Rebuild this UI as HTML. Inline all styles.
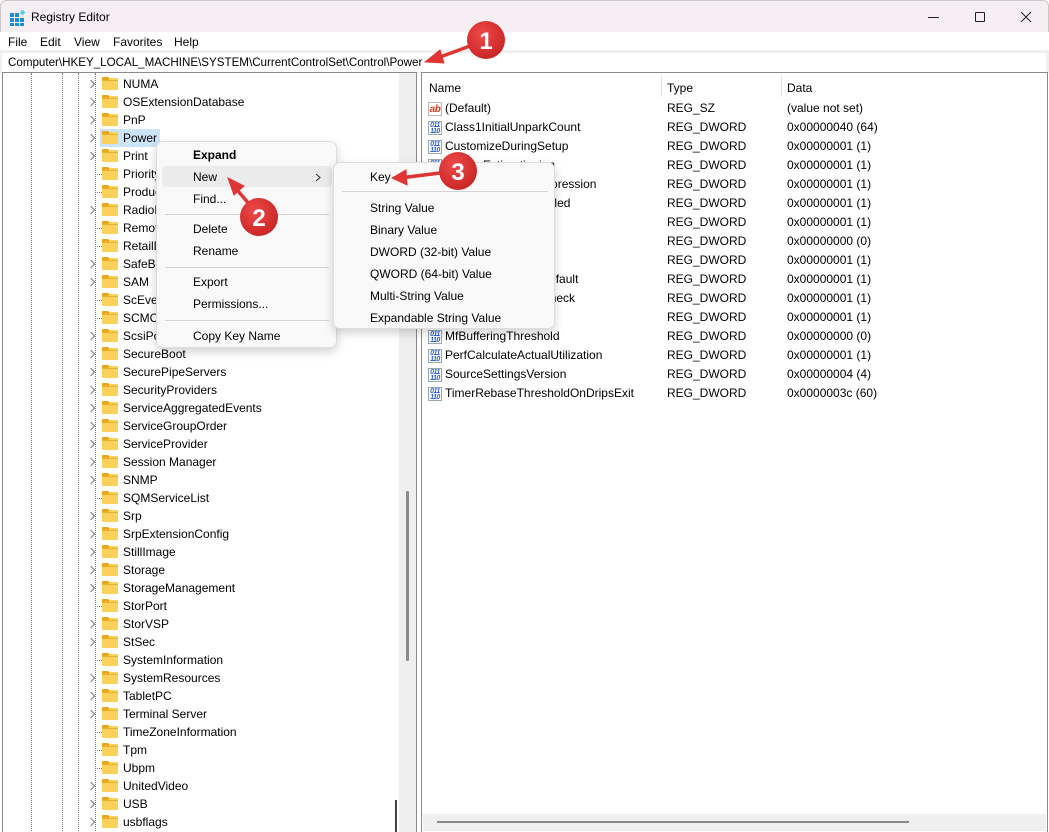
<!DOCTYPE html>
<html><head><meta charset="utf-8">
<style>
*{margin:0;padding:0;box-sizing:border-box}
body{width:1049px;height:830px;overflow:hidden;background:#fff;font-family:"Liberation Sans",sans-serif;font-size:12px;color:#000;position:relative}
.abs{position:absolute}
#title{left:0;top:0;width:1049px;height:32px;background:#f6eef3;border:1px solid #c8c8c8;border-bottom:none;border-radius:6px 6px 0 0}
#menu{left:0;top:32px;width:1049px;height:18px;background:#fff}
#menu span{position:absolute;top:3px;font-size:12px}
#addrbg{left:0;top:50px;width:1049px;height:23px;background:#efefef}
#addr{left:2px;top:53px;width:1044px;height:19px;background:#fff;padding-left:6px;line-height:19px;font-size:11.6px}
#tree{left:2px;top:72px;width:415px;height:760px;border-top:1px solid #8a8a8a;border-left:1px solid #8a8a8a;border-right:1px solid #8a8a8a;overflow:hidden}
#list{left:421px;top:72px;width:627px;height:760px;border:1px solid #8a8a8a;border-bottom:none}
.vd{position:absolute;top:0;height:760px;border-left:1px dotted #777}
.r{position:absolute;left:0;height:18px;line-height:18px;white-space:nowrap}
.r .t{position:absolute;left:120px;top:0}
.c{position:absolute;left:85px;top:6px;width:6px;height:6px;border-right:1.3px solid #777;border-top:1.3px solid #777;transform:rotate(45deg)}
.d{position:absolute;left:92px;top:9px;width:7px;border-top:1px dotted #777}
.f{position:absolute;left:99px;top:3px;width:16px;height:12px;background:#fbd15b;border-radius:1px}
.f:before{content:"";position:absolute;left:0;top:-1px;width:7px;height:3px;background:#e9a81a;border-radius:1px 1px 0 0}
.f:after{content:"";position:absolute;left:0;top:2px;width:16px;height:1px;background:#e9b12a}
.lr{position:absolute;left:0;height:19px;line-height:19px;width:625px;white-space:nowrap}
.lr .n{position:absolute;left:23px}
.lr .ty{position:absolute;left:245px}
.lr .da{position:absolute;left:365px}
.ic{position:absolute;left:6px;top:3px;width:14px;height:14px;border:1px solid #9aa;background:#fff;font-size:7px;line-height:6px;color:#2a5fd6;font-weight:bold;text-align:center;letter-spacing:-0.5px;padding-top:1px}
.ab{color:#d33c1c;font-size:10px;line-height:12px;border-color:#bbb}
.cm{position:absolute;background:#f9f9f9;border:1px solid #ddd;border-radius:7px;box-shadow:0 4px 10px rgba(0,0,0,.18)}
.mi{position:absolute;left:36px;font-size:12px}
.sep{position:absolute;height:1px;background:#d4d4d4}
</style></head><body>
<div id="title" class="abs">
 <svg class="abs" style="left:9px;top:9px" width="16" height="16" viewBox="0 0 16 16">
  <g fill="#1a8fd8"><rect x="0" y="3" width="4" height="4"/><rect x="5" y="3" width="4" height="4"/><rect x="0" y="8" width="4" height="4"/><rect x="5" y="8" width="4" height="4"/><rect x="10" y="8" width="4" height="4"/><rect x="0" y="13" width="4" height="3"/><rect x="5" y="13" width="4" height="3"/><rect x="10" y="13" width="4" height="3"/></g>
  <rect x="10.5" y="0.5" width="4" height="4" fill="#5cc8f5" transform="rotate(45 12.5 2.5)"/>
 </svg>
 <span class="abs" style="left:30px;top:9px;font-size:12px">Registry Editor</span>
 <div class="abs" style="left:927px;top:16px;width:11px;height:1px;background:#222"></div>
 <div class="abs" style="left:974px;top:11px;width:10px;height:10px;border:1px solid #222;border-radius:1px"></div>
 <svg class="abs" style="left:1019px;top:10px" width="12" height="12"><path d="M1 1L11 11M11 1L1 11" stroke="#222" stroke-width="1"/></svg>
</div>
<div id="menu" class="abs"><span style="left:8px">File</span><span style="left:40px">Edit</span><span style="left:74px">View</span><span style="left:113px">Favorites</span><span style="left:174px">Help</span></div>
<div id="addrbg" class="abs"></div>
<div id="addr" class="abs">Computer\HKEY_LOCAL_MACHINE\SYSTEM\CurrentControlSet\Control\Power</div>

<div id="tree" class="abs">
 <div class="vd" style="left:28px"></div><div class="vd" style="left:59px"></div><div class="vd" style="left:75px"></div><div class="vd" style="left:92px"></div>
 <div class="abs" style="left:97px;top:56px;width:60px;height:18px;background:#cce4f7"></div>
 <div class="r" style="top:2px"><i class="c"></i><b class="f"></b><span class="t">NUMA</span></div>
 <div class="r" style="top:20px"><i class="c"></i><b class="f"></b><span class="t">OSExtensionDatabase</span></div>
 <div class="r" style="top:38px"><i class="c"></i><b class="f"></b><span class="t">PnP</span></div>
 <div class="r" style="top:56px"><i class="c"></i><b class="f"></b><span class="t">Power</span></div>
 <div class="r" style="top:74px"><i class="c"></i><b class="f"></b><span class="t">Print</span></div>
 <div class="r" style="top:92px"><i class="d"></i><b class="f"></b><span class="t">PriorityControl</span></div>
 <div class="r" style="top:110px"><i class="d"></i><b class="f"></b><span class="t">ProductOptions</span></div>
 <div class="r" style="top:128px"><i class="c"></i><b class="f"></b><span class="t">RadioManagement</span></div>
 <div class="r" style="top:146px"><i class="d"></i><b class="f"></b><span class="t">RemoteAssistance</span></div>
 <div class="r" style="top:164px"><i class="d"></i><b class="f"></b><span class="t">RetailDemo</span></div>
 <div class="r" style="top:182px"><i class="c"></i><b class="f"></b><span class="t">SafeBoot</span></div>
 <div class="r" style="top:200px"><i class="c"></i><b class="f"></b><span class="t">SAM</span></div>
 <div class="r" style="top:218px"><i class="d"></i><b class="f"></b><span class="t">ScEvents</span></div>
 <div class="r" style="top:236px"><i class="d"></i><b class="f"></b><span class="t">SCMConfig</span></div>
 <div class="r" style="top:254px"><i class="c"></i><b class="f"></b><span class="t">ScsiPort</span></div>
 <div class="r" style="top:272px"><i class="c"></i><b class="f"></b><span class="t">SecureBoot</span></div>
 <div class="r" style="top:290px"><i class="c"></i><b class="f"></b><span class="t">SecurePipeServers</span></div>
 <div class="r" style="top:308px"><i class="c"></i><b class="f"></b><span class="t">SecurityProviders</span></div>
 <div class="r" style="top:326px"><i class="c"></i><b class="f"></b><span class="t">ServiceAggregatedEvents</span></div>
 <div class="r" style="top:344px"><i class="c"></i><b class="f"></b><span class="t">ServiceGroupOrder</span></div>
 <div class="r" style="top:362px"><i class="c"></i><b class="f"></b><span class="t">ServiceProvider</span></div>
 <div class="r" style="top:380px"><i class="c"></i><b class="f"></b><span class="t">Session Manager</span></div>
 <div class="r" style="top:398px"><i class="c"></i><b class="f"></b><span class="t">SNMP</span></div>
 <div class="r" style="top:416px"><i class="d"></i><b class="f"></b><span class="t">SQMServiceList</span></div>
 <div class="r" style="top:434px"><i class="c"></i><b class="f"></b><span class="t">Srp</span></div>
 <div class="r" style="top:452px"><i class="c"></i><b class="f"></b><span class="t">SrpExtensionConfig</span></div>
 <div class="r" style="top:470px"><i class="c"></i><b class="f"></b><span class="t">StillImage</span></div>
 <div class="r" style="top:488px"><i class="c"></i><b class="f"></b><span class="t">Storage</span></div>
 <div class="r" style="top:506px"><i class="c"></i><b class="f"></b><span class="t">StorageManagement</span></div>
 <div class="r" style="top:524px"><i class="d"></i><b class="f"></b><span class="t">StorPort</span></div>
 <div class="r" style="top:542px"><i class="c"></i><b class="f"></b><span class="t">StorVSP</span></div>
 <div class="r" style="top:560px"><i class="c"></i><b class="f"></b><span class="t">StSec</span></div>
 <div class="r" style="top:578px"><i class="d"></i><b class="f"></b><span class="t">SystemInformation</span></div>
 <div class="r" style="top:596px"><i class="c"></i><b class="f"></b><span class="t">SystemResources</span></div>
 <div class="r" style="top:614px"><i class="c"></i><b class="f"></b><span class="t">TabletPC</span></div>
 <div class="r" style="top:632px"><i class="c"></i><b class="f"></b><span class="t">Terminal Server</span></div>
 <div class="r" style="top:650px"><i class="d"></i><b class="f"></b><span class="t">TimeZoneInformation</span></div>
 <div class="r" style="top:668px"><i class="d"></i><b class="f"></b><span class="t">Tpm</span></div>
 <div class="r" style="top:686px"><i class="d"></i><b class="f"></b><span class="t">Ubpm</span></div>
 <div class="r" style="top:704px"><i class="c"></i><b class="f"></b><span class="t">UnitedVideo</span></div>
 <div class="r" style="top:722px"><i class="c"></i><b class="f"></b><span class="t">USB</span></div>
 <div class="r" style="top:740px"><i class="c"></i><b class="f"></b><span class="t">usbflags</span></div>
 <div class="abs" style="left:396px;top:0;width:17px;height:760px;background:#efefef"></div>
 <div class="abs" style="left:403px;top:418px;width:3px;height:170px;background:#8a8a8a;border-radius:1px"></div>
 <div class="abs" style="left:392px;top:727px;width:2px;height:33px;background:#444"></div>
</div>

<div id="list" class="abs">
 <span class="abs" style="left:7px;top:8px">Name</span>
 <div class="abs" style="left:239px;top:2px;width:1px;height:22px;background:#e5e5e5"></div>
 <span class="abs" style="left:245px;top:8px">Type</span>
 <div class="abs" style="left:359px;top:2px;width:1px;height:22px;background:#e5e5e5"></div>
 <span class="abs" style="left:365px;top:8px">Data</span>
 <div class="lr" style="top:26px"><i class="ic ab">ab</i><span class="n">(Default)</span><span class="ty">REG_SZ</span><span class="da">(value not set)</span></div>
 <div class="lr" style="top:45px"><i class="ic">011<br>110</i><span class="n">Class1InitialUnparkCount</span><span class="ty">REG_DWORD</span><span class="da">0x00000040 (64)</span></div>
 <div class="lr" style="top:64px"><i class="ic">011<br>110</i><span class="n">CustomizeDuringSetup</span><span class="ty">REG_DWORD</span><span class="da">0x00000001 (1)</span></div>
 <div class="lr" style="top:83px"><i class="ic">011<br>110</i><span class="n">EnergyEstimationion</span><span class="ty">REG_DWORD</span><span class="da">0x00000001 (1)</span></div>
 <div class="lr" style="top:102px"><i class="ic">011<br>110</i><span class="n">EventProcessorSuppression</span><span class="ty">REG_DWORD</span><span class="da">0x00000001 (1)</span></div>
 <div class="lr" style="top:121px"><i class="ic">011<br>110</i><span class="n">HiberbootEnabledabled</span><span class="ty">REG_DWORD</span><span class="da">0x00000001 (1)</span></div>
 <div class="lr" style="top:140px"><i class="ic">011<br>110</i><span class="n">HibernateEnabled</span><span class="ty">REG_DWORD</span><span class="da">0x00000001 (1)</span></div>
 <div class="lr" style="top:159px"><i class="ic">011<br>110</i><span class="n">Hiber</span><span class="ty">REG_DWORD</span><span class="da">0x00000000 (0)</span></div>
 <div class="lr" style="top:178px"><i class="ic">011<br>110</i><span class="n">Idle</span><span class="ty">REG_DWORD</span><span class="da">0x00000001 (1)</span></div>
 <div class="lr" style="top:197px"><i class="ic">011<br>110</i><span class="n">LidReliabilityStateDefault</span><span class="ty">REG_DWORD</span><span class="da">0x00000001 (1)</span></div>
 <div class="lr" style="top:216px"><i class="ic">011<br>110</i><span class="n">MfOverridesSleepCheck</span><span class="ty">REG_DWORD</span><span class="da">0x00000001 (1)</span></div>
 <div class="lr" style="top:235px"><i class="ic">011<br>110</i><span class="n">Mf</span><span class="ty">REG_DWORD</span><span class="da">0x00000001 (1)</span></div>
 <div class="lr" style="top:254px"><i class="ic">011<br>110</i><span class="n">MfBufferingThreshold</span><span class="ty">REG_DWORD</span><span class="da">0x00000000 (0)</span></div>
 <div class="lr" style="top:273px"><i class="ic">011<br>110</i><span class="n">PerfCalculateActualUtilization</span><span class="ty">REG_DWORD</span><span class="da">0x00000001 (1)</span></div>
 <div class="lr" style="top:292px"><i class="ic">011<br>110</i><span class="n">SourceSettingsVersion</span><span class="ty">REG_DWORD</span><span class="da">0x00000004 (4)</span></div>
 <div class="lr" style="top:311px"><i class="ic">011<br>110</i><span class="n">TimerRebaseThresholdOnDripsExit</span><span class="ty">REG_DWORD</span><span class="da">0x0000003c (60)</span></div>
 <div class="abs" style="left:1px;top:741px;width:623px;height:17px;background:#efefef"></div>
 <div class="abs" style="left:15px;top:748px;width:472px;height:2px;background:#8a8a8a"></div>
</div>

<div class="cm" style="left:156px;top:141px;width:181px;height:207px">
 <span class="mi" style="top:6px;font-weight:bold">Expand</span>
 <div class="abs" style="left:5px;top:24px;width:170px;height:21px;background:#ebebeb;border-radius:4px"></div>
 <span class="mi" style="top:28px">New</span>
 <svg class="abs" style="left:158px;top:31px" width="6" height="9"><path d="M1 1L5 4.5L1 8" stroke="#333" fill="none" stroke-width="1.1"/></svg>
 <span class="mi" style="top:50px">Find...</span>
 <div class="sep" style="left:8px;top:72px;width:164px"></div>
 <span class="mi" style="top:80px">Delete</span>
 <span class="mi" style="top:102px">Rename</span>
 <div class="sep" style="left:8px;top:125px;width:164px"></div>
 <span class="mi" style="top:133px">Export</span>
 <span class="mi" style="top:155px">Permissions...</span>
 <div class="sep" style="left:8px;top:178px;width:164px"></div>
 <span class="mi" style="top:187px">Copy Key Name</span>
</div>
<div class="cm" style="left:333px;top:162px;width:222px;height:167px">
 <span class="mi" style="top:7px">Key</span>
 <div class="sep" style="left:8px;top:28px;width:206px"></div>
 <span class="mi" style="top:38px">String Value</span>
 <span class="mi" style="top:60px">Binary Value</span>
 <span class="mi" style="top:82px">DWORD (32-bit) Value</span>
 <span class="mi" style="top:104px">QWORD (64-bit) Value</span>
 <span class="mi" style="top:126px">Multi-String Value</span>
 <span class="mi" style="top:148px">Expandable String Value</span>
</div>

<svg class="abs" style="left:0;top:0" width="1049" height="830">
 <defs><radialGradient id="g" cx="40%" cy="35%" r="70%"><stop offset="0" stop-color="#ee4a4a"/><stop offset="1" stop-color="#c92323"/></radialGradient></defs>
 <g stroke="#e03535" stroke-width="3.5" fill="#e03535" stroke-linecap="round">
  <line x1="470" y1="46" x2="432" y2="60"/><path d="M425 62L440 50L444 63Z" stroke-width="1"/>
  <line x1="250" y1="205" x2="232" y2="184"/><path d="M228 178L244 186L234 195Z" stroke-width="1"/>
  <line x1="440" y1="173" x2="400" y2="178"/><path d="M392 178L406 170L407 185Z" stroke-width="1"/>
 </g>
 <g font-family="Liberation Sans" font-weight="bold" font-size="24" fill="#fff" text-anchor="middle">
  <circle cx="486" cy="40" r="19" fill="url(#g)"/><text x="486" y="49">1</text>
  <circle cx="259" cy="217" r="19" fill="url(#g)"/><text x="259" y="226">2</text>
  <circle cx="458" cy="171" r="19" fill="url(#g)"/><text x="458" y="180">3</text>
 </g>
</svg>
</body></html>
